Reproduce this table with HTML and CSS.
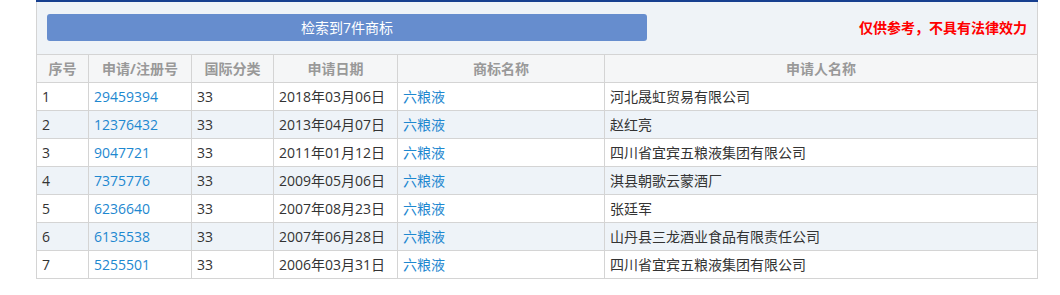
FILE: index.html
```html
<!DOCTYPE html>
<html lang="zh-CN">
<head>
<meta charset="utf-8">
<link rel="stylesheet" href="styles.css">
</head>
<body>
<div class="wrap">
  <div class="panel">
    <div class="result-btn">检索到7件商标</div>
    <div class="notice">仅供参考，不具有法律效力</div>
  </div>
  <table class="tm-table">
    <colgroup>
      <col class="c1"><col class="c2"><col class="c3"><col class="c4"><col class="c5"><col class="c6">
    </colgroup>
    <thead>
      <tr><th>序号</th><th>申请/注册号</th><th>国际分类</th><th>申请日期</th><th>商标名称</th><th>申请人名称</th></tr>
    </thead>
    <tbody>
      <tr><td>1</td><td><a class="lnk">29459394</a></td><td>33</td><td>2018年03月06日</td><td><a class="lnk">六粮液</a></td><td>河北晟虹贸易有限公司</td></tr>
      <tr><td>2</td><td><a class="lnk">12376432</a></td><td>33</td><td>2013年04月07日</td><td><a class="lnk">六粮液</a></td><td>赵红亮</td></tr>
      <tr><td>3</td><td><a class="lnk">9047721</a></td><td>33</td><td>2011年01月12日</td><td><a class="lnk">六粮液</a></td><td>四川省宜宾五粮液集团有限公司</td></tr>
      <tr><td>4</td><td><a class="lnk">7375776</a></td><td>33</td><td>2009年05月06日</td><td><a class="lnk">六粮液</a></td><td>淇县朝歌云蒙酒厂</td></tr>
      <tr><td>5</td><td><a class="lnk">6236640</a></td><td>33</td><td>2007年08月23日</td><td><a class="lnk">六粮液</a></td><td>张廷军</td></tr>
      <tr><td>6</td><td><a class="lnk">6135538</a></td><td>33</td><td>2007年06月28日</td><td><a class="lnk">六粮液</a></td><td>山丹县三龙酒业食品有限责任公司</td></tr>
      <tr><td>7</td><td><a class="lnk">5255501</a></td><td>33</td><td>2006年03月31日</td><td><a class="lnk">六粮液</a></td><td>四川省宜宾五粮液集团有限公司</td></tr>
    </tbody>
  </table>
</div>
</body>
</html>
```
FILE: styles.css
```css
html, body {
  margin: 0;
  padding: 0;
  background: #fff;
}
body {
  font-family: "Open Sans", "Noto Sans CJK SC", "Microsoft YaHei", sans-serif;
  font-size: 14px;
  color: #333;
}
.wrap {
  margin-left: 36px;
  width: 1002px;
  border-top: 2px solid #173f8f;
}
.panel {
  box-sizing: border-box;
  height: 52px;
  background: #eff3f7;
  border-left: 1px solid #d4d4d4;
  border-right: 1px solid #d4d4d4;
  padding: 12px 10px 0 10px;
  display: flex;
  align-items: flex-start;
  justify-content: space-between;
}
.result-btn {
  width: 600px;
  height: 27px;
  line-height: 27px;
  background: #668dce;
  border-radius: 3px;
  color: #fff;
  text-align: center;
  font-size: 14px;
}
.notice {
  color: #ff0000;
  font-weight: bold;
  font-size: 14px;
  line-height: 27px;
}
.tm-table {
  width: 1002px;
  border-collapse: collapse;
  table-layout: fixed;
}
.tm-table .c1 { width: 52px; }
.tm-table .c2 { width: 103px; }
.tm-table .c3 { width: 82px; }
.tm-table .c4 { width: 124px; }
.tm-table .c5 { width: 207px; }
.tm-table .c6 { width: auto; }
.tm-table th,
.tm-table td {
  border: 1px solid #d4d4d4;
  height: 27px;
  line-height: 27px;
  padding: 0 5px;
  font-size: 14px;
  white-space: nowrap;
  text-align: left;
}
.tm-table th {
  background: #f5f6f7;
  color: #999;
  font-weight: bold;
  font-size: 14px;
  text-align: center;
}
.tm-table tbody tr:nth-child(even) td {
  background: #eef3f8;
}
.lnk {
  color: #1e88d0;
  text-decoration: none;
}
```
